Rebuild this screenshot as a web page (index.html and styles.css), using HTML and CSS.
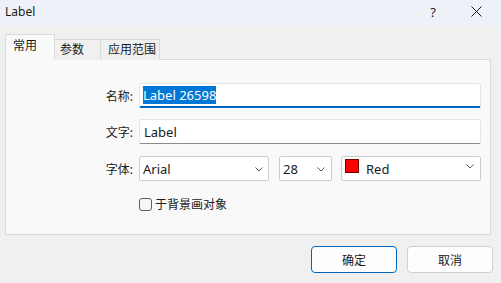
FILE: index.html
```html
<!DOCTYPE html>
<html lang="zh-CN">

<head>
    <meta charset="UTF-8">
    <title>Label</title>
    <link rel="stylesheet" href="styles.css">
</head>

<body>

    <div class="dialog">
        <div class="titlebar">
            <span class="title">Label</span>
            <span class="help">?</span>
            <span class="close">
                <svg width="11" height="11" viewBox="0 0 11 11">
                    <path d="M0.5 0.5 L10.5 10.5 M10.5 0.5 L0.5 10.5" stroke="#1a1a1a" stroke-width="1" fill="none" />
                </svg>
            </span>
        </div>

        <div class="content">
            <div class="tabs">
                <div class="tab tab-general active">常用</div>
                <div class="tab tab-params">参数</div>
                <div class="tab tab-scope">应用范围</div>
            </div>

            <div class="panel">
                <div class="row row-name">
                    <label class="field-label">名称:</label>
                    <div class="input focused"><span class="selection">Label 26598</span></div>
                </div>
                <div class="row row-text">
                    <label class="field-label">文字:</label>
                    <div class="input">Label</div>
                </div>
                <div class="row row-font">
                    <label class="field-label">字体:</label>
                    <div class="combo combo-font">
                        <span>Arial</span>
                        <svg class="chevron" width="8" height="5" viewBox="0 0 8 5">
                            <path d="M0.5 0.5 L4 4 L7.5 0.5" stroke="#5c5c5c" fill="none" />
                        </svg>
                    </div>
                    <div class="combo combo-size">
                        <span>28</span>
                        <svg class="chevron" width="8" height="5" viewBox="0 0 8 5">
                            <path d="M0.5 0.5 L4 4 L7.5 0.5" stroke="#5c5c5c" fill="none" />
                        </svg>
                    </div>
                    <div class="combo combo-color">
                        <span class="swatch"></span>
                        <span class="color-name">Red</span>
                        <svg class="chevron" width="8" height="5" viewBox="0 0 8 5">
                            <path d="M0.5 0.5 L4 4 L7.5 0.5" stroke="#5c5c5c" fill="none" />
                        </svg>
                    </div>
                </div>
                <div class="row row-check">
                    <label class="check">
                        <input type="checkbox">
                        <span>于背景画对象</span>
                    </label>
                </div>
            </div>

            <div class="buttons">
                <button class="btn default">确定</button>
                <button class="btn">取消</button>
            </div>
        </div>
    </div>

</body>

</html>
```

FILE: styles.css
```css
* {
    box-sizing: border-box;
}

body {
    margin: 0;
    width: 501px;
    height: 283px;
    overflow: hidden;
    font-family: "Noto Sans", "Noto Sans CJK SC", sans-serif;
    font-size: 12px;
    color: #1a1a1a;
    background-color: #f0f0f0;
}

.dialog {
    display: flex;
    flex-direction: column;
    height: 283px;
}

.titlebar {
    display: flex;
    align-items: center;
    height: 26px;
    padding: 0 19px 3px 5px;
    background-color: #eef2f8;
}

.title {
    flex: 1;
}

.help {
    margin-right: 35px;
    font-size: 13px;
}

.close {
    display: flex;
}

.content {
    padding: 9px 0 0 5px;
}

/* tabs */
.tabs {
    display: flex;
    align-items: flex-end;
    height: 25px;
    margin-bottom: -1px;
}

.tab {
    height: 21px;
    line-height: 19px;
    border: 1px solid #dadada;
    border-bottom: none;
    background-color: #f0f0f0;
}

.tab-general {
    width: 50px;
    padding-left: 7px;
}

.tab-params {
    width: 46px;
    padding-left: 5px;
    border-left: none;
}

.tab-scope {
    width: 59px;
    padding-left: 7px;
    border-left: none;
}

.tab.active {
    position: relative;
    z-index: 1;
    height: 26px;
    padding-top: 1px;
    background-color: #f9f9f9;
}

/* panel */
.panel {
    width: 486px;
    height: 176px;
    padding: 23px 9px 0 0;
    border: 1px solid #dadada;
    background-color: #f9f9f9;
}

.row {
    display: flex;
    align-items: center;
    height: 25px;
}

.row-name {
    margin-bottom: 11px;
}

.row-text {
    margin-bottom: 12px;
}

.row-check {
    height: 16px;
    margin-top: 15px;
    padding-left: 133px;
}

.field-label {
    width: 127px;
    margin-right: 6px;
    text-align: right;
}

.input {
    display: flex;
    align-items: center;
    width: 342px;
    height: 25px;
    padding-left: 4px;
    font-size: 13px;
    background-color: #fff;
    border: 1px solid #e5e5e5;
    border-bottom-color: #8a8a8a;
    border-radius: 2px;
}

.input.focused {
    padding-left: 3px;
    border-bottom: 2px solid #0067c0;
}

.selection {
    height: 18px;
    line-height: 18px;
    background-color: #0078d7;
    color: #fff;
}

.combo {
    position: relative;
    display: flex;
    align-items: center;
    height: 25px;
    padding-left: 3px;
    font-size: 13px;
    background-color: #fff;
    border: 1px solid #cdcdcd;
    border-radius: 2px;
}

.combo-font {
    width: 130px;
    margin-right: 10px;
}

.combo-size {
    width: 53px;
    margin-right: 9px;
}

.combo-color {
    width: 140px;
}

.chevron {
    position: absolute;
    right: 6px;
    top: 10px;
}

.combo-font .chevron {
    right: 5px;
}

.combo-color .chevron {
    top: 7px;
    right: 6px;
}

.swatch {
    width: 14px;
    height: 14px;
    margin: -6px 7px 0 0;
    background-color: #ff0000;
    border: 1px solid #7a0000;
}

.check {
    display: flex;
    align-items: center;
    gap: 3px;
}

.check input {
    appearance: none;
    width: 13px;
    height: 13px;
    margin: 0;
    border: 1px solid #5f5f5f;
    border-radius: 3px;
    background-color: #f6f6f6;
}

/* buttons */
.buttons {
    display: flex;
    justify-content: flex-end;
    gap: 10px;
    margin-top: 11px;
    padding-right: 8px;
}

.btn {
    width: 86px;
    height: 27px;
    font-family: "Noto Sans CJK SC", sans-serif;
    font-size: 12px;
    color: #1a1a1a;
    background-color: #fdfdfd;
    border: 1px solid #d0d0d0;
    border-radius: 4px;
}

.btn.default {
    border-color: #0067c0;
}
```
